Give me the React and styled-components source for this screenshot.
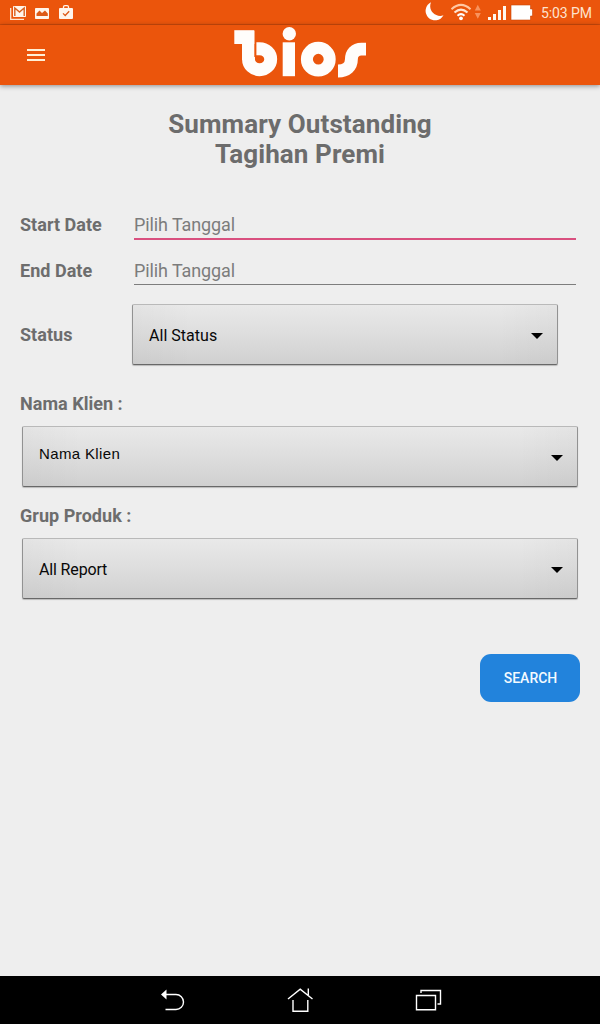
import React from "react";
import styled, { createGlobalStyle } from "styled-components";

const GlobalStyle = createGlobalStyle`
  *, *::before, *::after { box-sizing: border-box; }
  body { margin: 0; background: #eeeeee; font-family: Roboto, "Liberation Sans", sans-serif; }
`;

const Screen = styled.div`
  display: flex;
  flex-direction: column;
  width: 600px;
  height: 1024px;
  overflow: hidden;
  background: #eeeeee;
`;

const StatusBar = styled.div`
  display: flex;
  flex: none;
  justify-content: space-between;
  height: 25px;
  background: #eb550c;
  border-bottom: 1px solid #cf4a0b;
`;

const StatusIcons = styled.svg`
  display: block;
  flex: none;
`;

const StatusRight = styled.div`
  display: flex;
  align-items: flex-start;
  padding-right: 8px;
`;

const Clock = styled.span`
  width: 51px;
  font-size: 14px;
  line-height: 27px;
  letter-spacing: -0.1px;
  color: #fde3cf;
  white-space: nowrap;
`;

const AppBar = styled.header`
  display: flex;
  flex: none;
  height: 60px;
  padding-left: 27px;
  background: #eb550c;
  box-shadow: 0 1px 5px rgba(0, 0, 0, 0.42);
`;

const MenuButton = styled.button`
  display: flex;
  flex-direction: column;
  gap: 3px;
  width: 18px;
  margin: 24px 189px 0 0;
  padding: 0;
  border: 0;
  background: none;
`;

const MenuLine = styled.span`
  width: 100%;
  height: 2px;
  background: #fff0d6;
`;

const Logo = styled.svg`
  display: block;
  flex: none;
  margin-top: 1px;
`;

const Content = styled.main`
  flex: 1;
  padding: 24px 20px 0;
`;

const Title = styled.h1`
  margin: 0;
  font-size: 26px;
  font-weight: 700;
  line-height: 30px;
  letter-spacing: 0.1px;
  text-align: center;
  color: #6c6c6c;
`;

const Form = styled.form`
  display: flex;
  flex-direction: column;
  padding-top: 35px;
`;

const DateRow = styled.div`
  display: flex;
  height: 46px;
  padding-right: 4px;
`;

const Label = styled.label`
  flex: none;
  width: ${(p) => p.$width || "auto"};
  font-size: 18px;
  font-weight: 700;
  line-height: ${(p) => p.$line || 24}px;
  letter-spacing: 0.03px;
  color: #6d6d6d;
`;

const DateField = styled.div`
  flex: 1;
  height: ${(p) => (p.$active ? 36 : 35)}px;
  font-size: 18px;
  line-height: 42px;
  letter-spacing: -0.1px;
  color: #7c7c7c;
  border-bottom: ${(p) => (p.$active ? "2px solid #d9507f" : "1px solid #7d7d7d")};
`;

const StatusRow = styled.div`
  display: flex;
  padding: 8px 22px 0 0;
`;

const Field = styled.div`
  display: flex;
  flex-direction: column;
  padding: ${(p) => p.$top}px 2px 0;
`;

const FieldLabel = styled(Label)`
  margin: 0 -2px 10px;
`;

const Select = styled.div`
  display: flex;
  flex: 1 0 auto;
  align-items: center;
  justify-content: space-between;
  height: 61px;
  padding: 2px 14px 0 16px;
  border: 1px solid;
  border-color: #b9b9b9 #929292 #686868 #929292;
  border-radius: 2px;
  background:
    linear-gradient(90deg, rgba(0, 0, 0, 0.025), transparent 60px, transparent calc(100% - 60px), rgba(0, 0, 0, 0.025)),
    linear-gradient(#e9e9e9, #dddddd 52%, #d0d0d0);
  box-shadow: 0 1px 1px rgba(0, 0, 0, 0.22);
`;

const SelectText = styled.span`
  font-size: 16px;
  line-height: 20px;
  letter-spacing: ${(p) => (p.$tight ? "-0.15px" : "0.03px")};
  color: #080808;
`;

const PlainSelectText = styled(SelectText)`
  padding-bottom: 7px;
  font-family: "Liberation Sans", Arial, sans-serif;
  font-size: 15px;
  letter-spacing: 0.36px;
`;

const Caret = styled.span`
  width: 12px;
  height: 6px;
  margin-top: 1px;
  background: #000;
  clip-path: polygon(0 0, 100% 0, 50% 100%);
`;

const Actions = styled.div`
  display: flex;
  justify-content: flex-end;
  padding-top: 55px;
`;

const SearchButton = styled.button`
  width: 100px;
  height: 48px;
  padding: 0 0 0 1px;
  border: 0;
  border-radius: 11px;
  background: #2283dc;
  color: #f4faff;
  font-family: inherit;
  font-size: 14px;
  font-weight: 500;
`;

const NavBar = styled.nav`
  display: flex;
  flex: none;
  justify-content: center;
  height: 48px;
  background: #000;
`;

const NavItem = styled.div`
  display: flex;
  width: 128px;
  justify-content: center;
`;

function NotificationIcons() {
  return (
    <StatusIcons width="90" height="24" viewBox="0 0 90 24" fill="none">
      <path d="M10.7 8v11.3H24" stroke="#ffe5cf" strokeWidth="1.3" />
      <rect x="13" y="6" width="13" height="11" rx="0.8" fill="#fff5ec" />
      <path d="M14.8 16V8l4.7 4 4.7-4v8" stroke="#d9601f" strokeWidth="1.4" />
      <rect x="35" y="8" width="14" height="11" rx="0.8" fill="#fff5ec" />
      <path d="M36.5 16v-2.5l3-3 2.5 2.4 3-2.4 2.8 3V16z" fill="#dd5a17" />
      <path d="M63.5 8.5V7q0-1.4 1.4-1.4h2.2q1.4 0 1.4 1.4v1.5" stroke="#fff5ec" strokeWidth="1.3" />
      <rect x="59" y="8" width="14" height="11" rx="1" fill="#fff5ec" />
      <path d="M63 13.4l2.2 2.1 4-4.3" stroke="#dd5a17" strokeWidth="1.3" />
    </StatusIcons>
  );
}

function SystemIcons() {
  return (
    <StatusIcons width="120" height="24" viewBox="421 0 120 24" fill="none">
      <path d="M431 2.300A9.500 9.500 0 1 0 443.500 15.300C436 18 427.500 11 431 2.300z" fill="#fff" />
      <g stroke="#ffc7a3" strokeWidth="2.1">
        <path d="M451.500 9.200q9.500-8.500 19 0" />
        <path d="M454.500 12.600q6.500-6 13 0" stroke="#ffe5d2" />
        <path d="M457.500 15.700q3.500-3.200 7 0" stroke="#fff" />
      </g>
      <circle cx="461" cy="18.300" r="1.900" fill="#fff" />
      <path d="M474.800 10.500l3-5.700 3 5.700zM474.800 13l3 5.700 3-5.700z" fill="#f8935e" />
      <path d="M488 17h3v3h-3zM493 14h3v6h-3zM498 10h3v10h-3zM503 6h3v14h-3z" fill="#fff8f0" />
      <path d="M511 5h19.500v4h2v7h-2v4H511z" fill="#fff" stroke="#c64708" strokeWidth="0.6" />
    </StatusIcons>
  );
}

function BiosLogo() {
  return (
    <Logo width="134" height="52" viewBox="234 26 134 52" role="img" aria-label="bios">
      <g fill="#fffdfb">
        <rect x="234.300" y="30.200" width="20" height="13.800" />
        <rect x="242" y="31" width="12.300" height="29" />
        <circle cx="289.300" cy="33.800" r="6.700" />
        <rect x="282.700" y="42.300" width="12.300" height="33.900" />
      </g>
      <g fill="none" stroke="#fffdfb" strokeWidth="12">
        <path d="M248.500 57v2.200A11.100 10.500 0 1 0 259.600 48.700H256.400" strokeWidth="12.900" />
        <circle cx="318.300" cy="59.200" r="11.400" />
        <path d="M338 71c8.500 0 13.400-4.500 13.400-11.700 0-6.200 3.700-10.200 10-10.200H366" strokeWidth="12.900" />
      </g>
    </Logo>
  );
}

function Dropdown({ children, plain, tight }) {
  const Text = plain ? PlainSelectText : SelectText;
  return (
    <Select>
      <Text $tight={tight}>{children}</Text>
      <Caret />
    </Select>
  );
}

export default function App() {
  return (
    <Screen>
      <GlobalStyle />
      <StatusBar>
        <NotificationIcons />
        <StatusRight>
          <SystemIcons />
          <Clock>5:03 PM</Clock>
        </StatusRight>
      </StatusBar>
      <AppBar>
        <MenuButton aria-label="Menu">
          <MenuLine />
          <MenuLine />
          <MenuLine />
        </MenuButton>
        <BiosLogo />
      </AppBar>
      <Content>
        <Title>
          Summary Outstanding
          <br />
          Tagihan Premi
        </Title>
        <Form>
          <DateRow>
            <Label $width="114px" $line={42}>Start Date</Label>
            <DateField $active>Pilih Tanggal</DateField>
          </DateRow>
          <DateRow>
            <Label $width="114px" $line={42}>End Date</Label>
            <DateField>Pilih Tanggal</DateField>
          </DateRow>
          <StatusRow>
            <Label $width="112px" $line={62}>Status</Label>
            <Dropdown>All Status</Dropdown>
          </StatusRow>
          <Field $top={26}>
            <FieldLabel>Nama Klien :</FieldLabel>
            <Dropdown plain>Nama Klien</Dropdown>
          </Field>
          <Field $top={17}>
            <FieldLabel>Grup Produk :</FieldLabel>
            <Dropdown tight>All Report</Dropdown>
          </Field>
          <Actions>
            <SearchButton type="button">SEARCH</SearchButton>
          </Actions>
        </Form>
      </Content>
      <NavBar>
        <NavItem>
          <svg width="32" height="48" viewBox="156 976 32 48" fill="none" stroke="#fff" strokeWidth="1.4">
            <path d="M165 994.500h11a7.500 7.500 0 0 1 0 15h-10.500" />
            <path d="M161 994.500l5.500-5v10z" fill="#fff" stroke="none" />
          </svg>
        </NavItem>
        <NavItem>
          <svg width="32" height="48" viewBox="284 976 32 48" fill="none" stroke="#fff" strokeWidth="1.4">
            <path d="M288 999l12.200-9.800L312.500 999M308.300 995v-6.500M293 1000v11.200h14.800V1000" />
          </svg>
        </NavItem>
        <NavItem>
          <svg width="32" height="48" viewBox="412 976 32 48" fill="none" stroke="#fff" strokeWidth="1.4">
            <path d="M416.500 995.500h19v14.300h-19zM421 993v-2.500h19.500v13.500h-3" />
          </svg>
        </NavItem>
      </NavBar>
    </Screen>
  );
}
